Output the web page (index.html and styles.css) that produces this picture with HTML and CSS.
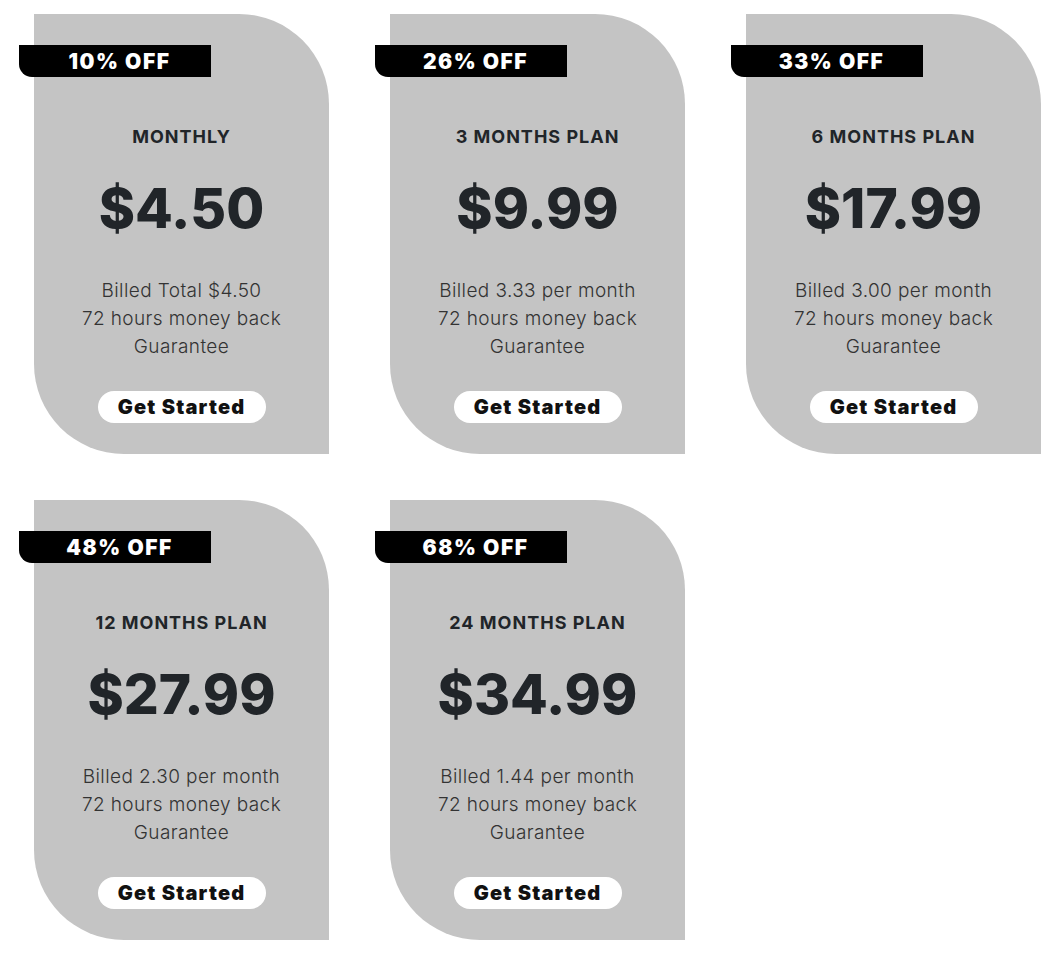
FILE: index.html
```html
<!DOCTYPE html>
<html lang="en">
<head>
  <meta charset="UTF-8">
  <meta name="viewport" content="width=device-width, initial-scale=1.0">
  <title>Pricing plans</title>
  <link rel="stylesheet" href="styles.css">
</head>
<body>

<div id="plans">
  <div class="plan-card">
    <div class="discount">10% OFF</div>
    <h3 class="plan-title">MONTHLY</h3>
    <div class="plan-price">$4.50</div>
    <p class="plan-info">Billed Total $4.50<br>72 hours money back<br>Guarantee</p>
    <a href="#" class="start-button">Get Started</a>
  </div>

  <div class="plan-card">
    <div class="discount">26% OFF</div>
    <h3 class="plan-title">3 MONTHS PLAN</h3>
    <div class="plan-price">$9.99</div>
    <p class="plan-info">Billed 3.33 per month<br>72 hours money back<br>Guarantee</p>
    <a href="#" class="start-button">Get Started</a>
  </div>

  <div class="plan-card">
    <div class="discount">33% OFF</div>
    <h3 class="plan-title">6 MONTHS PLAN</h3>
    <div class="plan-price">$17.99</div>
    <p class="plan-info">Billed 3.00 per month<br>72 hours money back<br>Guarantee</p>
    <a href="#" class="start-button">Get Started</a>
  </div>

  <div class="plan-card">
    <div class="discount">48% OFF</div>
    <h3 class="plan-title">12 MONTHS PLAN</h3>
    <div class="plan-price">$27.99</div>
    <p class="plan-info">Billed 2.30 per month<br>72 hours money back<br>Guarantee</p>
    <a href="#" class="start-button">Get Started</a>
  </div>

  <div class="plan-card">
    <div class="discount">68% OFF</div>
    <h3 class="plan-title">24 MONTHS PLAN</h3>
    <div class="plan-price">$34.99</div>
    <p class="plan-info">Billed 1.44 per month<br>72 hours money back<br>Guarantee</p>
    <a href="#" class="start-button">Get Started</a>
  </div>
</div>

</body>
</html>
```

FILE: styles.css
```css
body {
  font-family: 'Inter', 'Open Sans', sans-serif;
  background-color: #fff;
  margin: 0;
  color: #212529;
}

#plans {
  display: grid;
  grid-template-columns: repeat(3, 295px);
  column-gap: 61px;
  row-gap: 46px;
  padding: 14px 0 0 34px;
}

.plan-card {
  position: relative;
  height: 440px;
  box-sizing: border-box;
  padding-top: 112px;
  background-color: #c4c4c4;
  border-radius: 0 90px 0 90px;
  display: flex;
  flex-direction: column;
  align-items: center;
  text-align: center;
}

.discount {
  position: absolute;
  top: 31px;
  left: -15px;
  width: 192px;
  height: 32px;
  box-sizing: border-box;
  padding-left: 9px;
  background-color: #000;
  color: #fff;
  border-radius: 0 0 0 13px;
  font-size: 21px;
  font-weight: 900;
  letter-spacing: 1.5px;
  line-height: 33px;
}

.plan-title {
  margin: 0;
  font-size: 18px;
  font-weight: 700;
  line-height: 22px;
  letter-spacing: 1px;
}

.plan-price {
  margin-top: 28px;
  font-size: 55px;
  font-weight: 800;
  line-height: 64px;
}

.plan-info {
  margin: 37px 0 0;
  font-size: 19px;
  font-weight: 300;
  line-height: 28px;
  letter-spacing: 0.4px;
  color: #333;
}

.start-button {
  margin-top: 30px;
  width: 168px;
  height: 32px;
  line-height: 32px;
  border-radius: 16px;
  background-color: #fff;
  color: #111;
  text-decoration: none;
  font-size: 20px;
  font-weight: 900;
  letter-spacing: 1.2px;
}
```
